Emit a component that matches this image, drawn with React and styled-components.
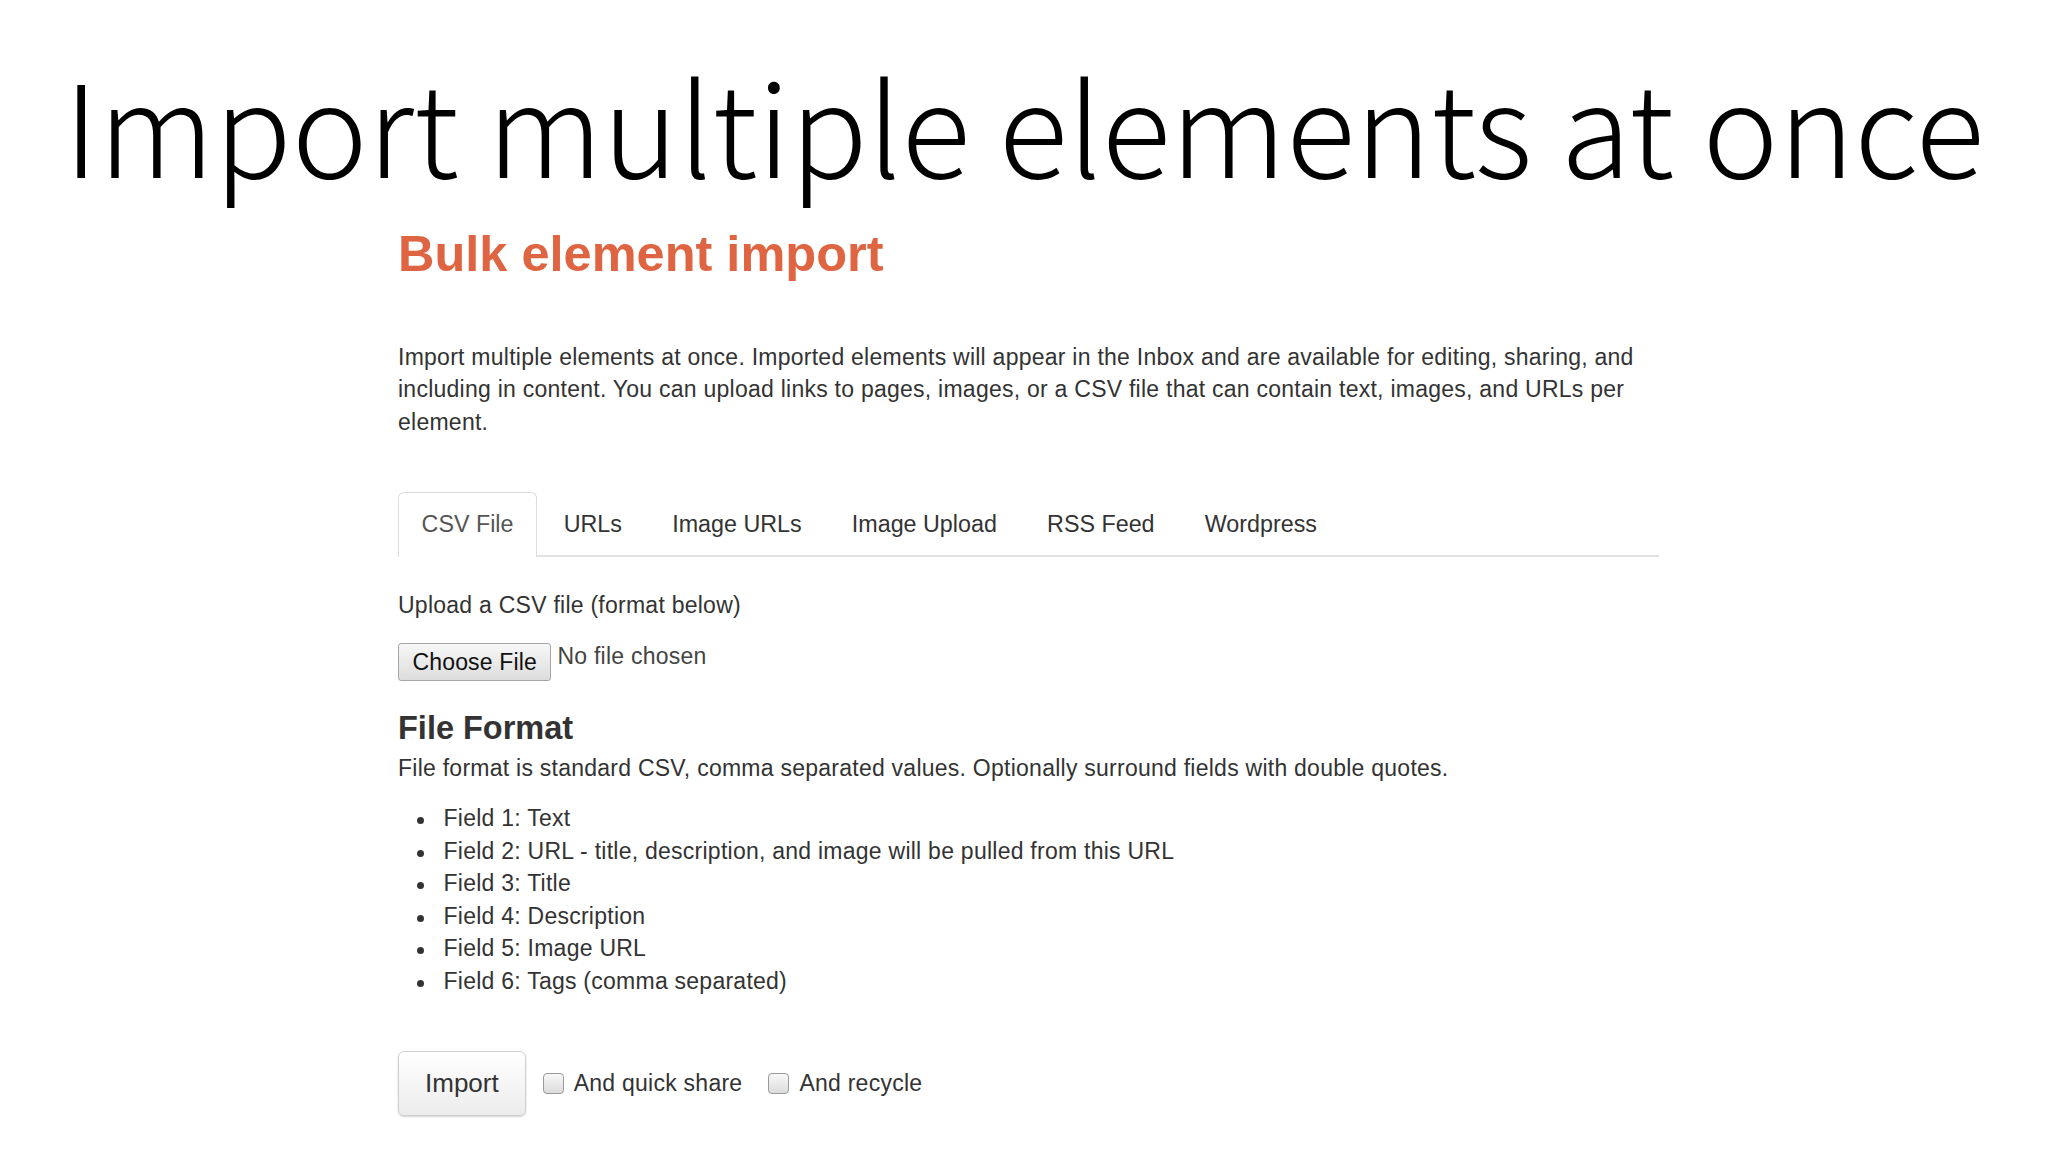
import React, { useState } from 'react'
import styled, { createGlobalStyle } from 'styled-components'

const GlobalStyle = createGlobalStyle`
  html, body {
    margin: 0;
    padding: 0;
    background: #fff;
  }
  * {
    box-sizing: border-box;
  }
`

const Slide = styled.div`
  width: 2048px;
  height: 1152px;
  overflow: hidden;
  background: #fff;
  display: flex;
  flex-direction: column;
`

const SlideTitle = styled.h1`
  margin: 59px 0 0;
  font-family: "Noto Sans CJK KR", "Noto Sans", sans-serif;
  font-weight: 300;
  font-size: 128px;
  line-height: 128px;
  color: #000;
  text-align: center;
  white-space: nowrap;
`

const Panel = styled.section`
  margin-left: 398px;
  width: 1261px;
  font-family: "Liberation Sans", Arial, sans-serif;
  font-size: 23px;
  line-height: 32.6px;
  letter-spacing: 0.25px;
  color: #333;
`

const PageHeading = styled.h2`
  margin: 39px 0 0;
  font-size: 50.5px;
  line-height: 56px;
  font-weight: 700;
  letter-spacing: 0;
  color: #df6542;
`

const Text = styled.p`
  margin: ${p => p.$top || 0}px 0 0;
`

const TabList = styled.ul`
  display: flex;
  list-style: none;
  margin: 53.5px 0 0;
  padding: 0;
  border-bottom: 2px solid #e2e2e2;
`

const Tab = styled.li`
  position: relative;
  margin: 0 3px -2px 0;
  padding: 15px 22.6px 16px;
  font-size: 23.3px;
  letter-spacing: 0;
  border: 1px solid ${p => (p.$active ? '#dcdcdc' : 'transparent')};
  border-bottom: 0;
  border-radius: 6px 6px 0 0;
  background: ${p => (p.$active ? '#fff' : 'transparent')};
  color: ${p => (p.$active ? '#555' : '#333')};
  cursor: pointer;
`

const FileRow = styled.div`
  display: flex;
  align-items: flex-start;
  gap: 6px;
  margin-top: 21.7px;
`

const FileButton = styled.button`
  height: 38px;
  padding: 0 13.5px;
  font-family: "Liberation Sans", Arial, sans-serif;
  font-size: 23px;
  line-height: 36px;
  letter-spacing: 0.15px;
  color: #111;
  border: 1px solid #a6a6a6;
  border-radius: 3px;
  background: linear-gradient(#f7f7f7, #dddddd);
`

const FileStatus = styled.span`
  line-height: 26px;
  color: #444;
`

const SectionHeading = styled.h4`
  margin: 30px 0 0;
  font-size: 32.5px;
  line-height: 34px;
  font-weight: 700;
  letter-spacing: 0;
  color: #333;
`

const FieldList = styled.ul`
  list-style: none;
  margin: 17px 0 0;
  padding: 0 0 0 18.5px;
`

const Field = styled.li`
  display: flex;

  &::before {
    content: "";
    flex: none;
    width: 7px;
    height: 7px;
    margin: 15px 20px 0 0;
    border-radius: 50%;
    background: #333;
  }
`

const ActionRow = styled.div`
  display: flex;
  align-items: center;
  margin-top: 53.7px;
`

const ImportButton = styled.button`
  height: 65px;
  padding: 0 26px;
  font-family: "Liberation Sans", Arial, sans-serif;
  font-size: 26px;
  color: #333;
  border: 1px solid #cfcfcf;
  border-radius: 6px;
  background: linear-gradient(#ffffff, #ececec);
  box-shadow: 0 1px 2px rgba(0, 0, 0, 0.18);
  cursor: pointer;
`

const CheckLabel = styled.label`
  display: inline-flex;
  align-items: center;
  gap: 10px;
  margin-left: ${p => p.$gap}px;
  color: #333;
`

const Check = styled.input`
  appearance: none;
  width: 21px;
  height: 21px;
  margin: 0;
  border: 1px solid #9a9a9a;
  border-radius: 4px;
  background: linear-gradient(#f8f8f8, #dcdcdc);

  &:checked {
    background: #6b9bd6;
    border-color: #4a7ab8;
  }
`

const tabs = ['CSV File', 'URLs', 'Image URLs', 'Image Upload', 'RSS Feed', 'Wordpress']

const fields = [
  'Field 1: Text',
  'Field 2: URL - title, description, and image will be pulled from this URL',
  'Field 3: Title',
  'Field 4: Description',
  'Field 5: Image URL',
  'Field 6: Tags (comma separated)'
]

export default function App () {
  const [activeTab, setActiveTab] = useState('CSV File')

  return (
    <>
      <GlobalStyle />
      <Slide>
        <SlideTitle>Import multiple elements at once</SlideTitle>
        <Panel>
          <PageHeading>Bulk element import</PageHeading>
          <Text $top={58.7}>
            Import multiple elements at once. Imported elements will appear in the Inbox and are
            available for editing, sharing, and including in content. You can upload links to
            pages, images, or a CSV file that can contain text, images, and URLs per element.
          </Text>

          <TabList>
            {tabs.map(t => (
              <Tab key={t} $active={t === activeTab} onClick={() => setActiveTab(t)}>
                {t}
              </Tab>
            ))}
          </TabList>

          <Text $top={32}>Upload a CSV file (format below)</Text>
          <FileRow>
            <FileButton type="button">Choose File</FileButton>
            <FileStatus>No file chosen</FileStatus>
          </FileRow>

          <SectionHeading>File Format</SectionHeading>
          <Text $top={7.6}>
            File format is standard CSV, comma separated values. Optionally surround fields with
            double quotes.
          </Text>
          <FieldList>
            {fields.map(f => (
              <Field key={f}>{f}</Field>
            ))}
          </FieldList>

          <ActionRow>
            <ImportButton type="button">Import</ImportButton>
            <CheckLabel $gap={17}>
              <Check type="checkbox" />
              And quick share
            </CheckLabel>
            <CheckLabel $gap={26}>
              <Check type="checkbox" />
              And recycle
            </CheckLabel>
          </ActionRow>
        </Panel>
      </Slide>
    </>
  )
}
